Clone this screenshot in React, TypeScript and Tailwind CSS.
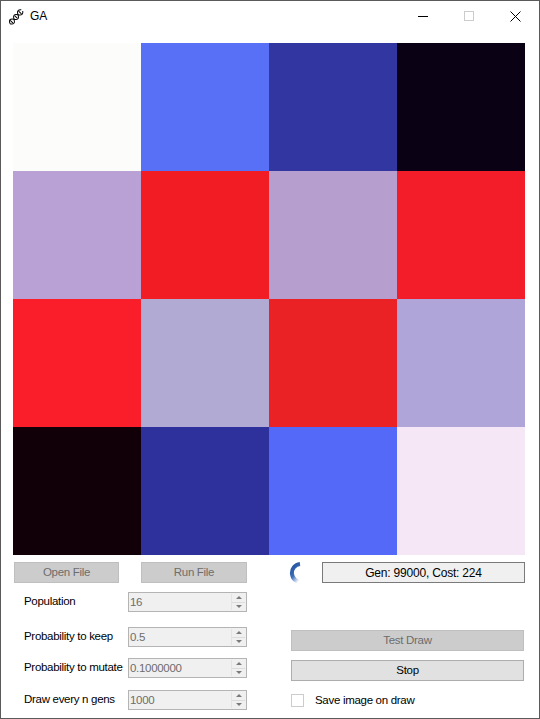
import React from 'react';

const cells = [
  '#fcfcfa', '#5870f5', '#3236a1', '#0b0114',
  '#b9a1d5', '#f21d24', '#b69fcf', '#f21d28',
  '#fa1e2a', '#b1aad2', '#ea2225', '#afa5d8',
  '#110008', '#2e309c', '#5469f8', '#f6e7f7',
];

const params = [
  { label: 'Population', value: '16', mt: 'mt-[9px]' },
  { label: 'Probability to keep', value: '0.5', mt: 'mt-[15px]' },
  { label: 'Probability to mutate', value: '0.1000000', mt: 'mt-[11px]' },
  { label: 'Draw every n gens', value: '1000', mt: 'mt-[12px]' },
];

function DnaIcon() {
  // helix drawn flat, then turned onto the diagonal
  return (
    <svg width="16" height="16" viewBox="0 0 16 16" fill="none" stroke="#000" strokeWidth="1">
      <g transform="rotate(-48 8 8)">
        <path d="M-1 8 C1 4.5, 3 4.5, 5 8 S9 11.5, 11 8 S15 4.5, 17 7" />
        <path d="M-1 8 C1 11.5, 3 11.5, 5 8 S9 4.5, 11 8 S15 11.5, 17 9" />
        <path d="M1.5 6 V10 M8 6 V10 M14 6 V10" />
      </g>
    </svg>
  );
}

function Spinner() {
  return (
    <svg width="16" height="22" viewBox="0 0 16 22">
      <defs>
        <linearGradient id="sp" x1="0" y1="0" x2="0.6" y2="1">
          <stop offset="0" stopColor="#1f4f9e" />
          <stop offset="0.55" stopColor="#3f6fb8" />
          <stop offset="1" stopColor="#ffffff" />
        </linearGradient>
      </defs>
      <path d="M11 2 A9 9 0 0 0 13 20" stroke="url(#sp)" strokeWidth="4" fill="none" />
    </svg>
  );
}

function SpinBox({ value }: { value: string }) {
  return (
    <div className="flex w-[119px] h-[20px] bg-[#f0f0f0] border border-[#b4b4b4]">
      <div className="flex-1 pl-[1px] text-[#6d6d6d] leading-[18px]">{value}</div>
      <div className="flex flex-col w-[14px] my-[1px] mr-[1px] border-l border-[#e3e3e3]">
        <div className="flex-1 flex items-center justify-center border-b border-[#dcdcdc]">
          <div className="w-0 h-0 border-l-[3px] border-r-[3px] border-b-[3px] border-l-transparent border-r-transparent border-b-[#7a7a7a]" />
        </div>
        <div className="flex-1 flex items-center justify-center">
          <div className="w-0 h-0 border-l-[3px] border-r-[3px] border-t-[3px] border-l-transparent border-r-transparent border-t-[#7a7a7a]" />
        </div>
      </div>
    </div>
  );
}

export default function App() {
  return (
    <div
      className="w-[540px] h-[719px] border border-[#5a5a5a] bg-white flex flex-col text-[11.5px] tracking-[-0.3px] text-black"
      style={{ fontFamily: '"Liberation Sans", Arial, sans-serif' }}
    >
      {/* Title bar */}
      <div className="h-[30px] flex items-center">
        <div className="ml-[7px] mt-[1px]">
          <DnaIcon />
        </div>
        <span className="ml-[6px] text-[12px] tracking-normal">GA</span>
        <div className="ml-auto flex items-center h-full">
          <div className="w-[46px] flex justify-center">
            <div className="w-[10px] h-px bg-black" />
          </div>
          <div className="w-[46px] flex justify-center">
            <div className="w-[10px] h-[10px] border border-[#cccccc]" />
          </div>
          <div className="w-[46px] flex justify-center mr-[1px]">
            <svg width="11" height="11" viewBox="0 0 11 11" stroke="#000" strokeWidth="1">
              <path d="M0.5 0.5 L10.5 10.5 M10.5 0.5 L0.5 10.5" />
            </svg>
          </div>
        </div>
      </div>

      {/* Image grid */}
      <div className="mt-[12px] ml-[12px] grid grid-cols-4 w-[512px] h-[512px]">
        {cells.map((c, i) => (
          <div key={i} style={{ backgroundColor: c }} />
        ))}
      </div>

      {/* Top controls row */}
      <div className="mt-[7px] flex items-center h-[21px]">
        <button className="ml-[13px] w-[105px] h-[21px] bg-[#cccccc] border border-[#bfbfbf] text-[#6d6d6d]">
          Open File
        </button>
        <button className="ml-[22px] w-[106px] h-[21px] bg-[#cccccc] border border-[#bfbfbf] text-[#6d6d6d]">
          Run File
        </button>
        <div className="ml-[42px] w-[16px] h-[22px]">
          <Spinner />
        </div>
        <div className="ml-[17px] w-[203px] h-[21px] bg-[#f0f0f0] border border-[#7a7a7a] flex items-center justify-center text-[12px] tracking-[-0.2px]">
          Gen: 99000, Cost: 224
        </div>
      </div>

      {/* Parameters and actions */}
      <div className="flex">
        <div className="flex flex-col w-[246px]">
          {params.map((p) => (
            <div key={p.label} className={`flex items-center ${p.mt}`}>
              <span className="ml-[23px] w-[104px] whitespace-nowrap">{p.label}</span>
              <SpinBox value={p.value} />
            </div>
          ))}
        </div>
        <div className="flex flex-col ml-[44px] w-[233px]">
          <button className="mt-[47px] h-[21px] bg-[#cccccc] border border-[#bfbfbf] text-[#6d6d6d]">
            Test Draw
          </button>
          <button className="mt-[9px] h-[21px] bg-[#e1e1e1] border border-[#adadad] text-black">
            Stop
          </button>
          <div className="mt-[11px] flex items-center">
            <div className="w-[13px] h-[13px] border border-[#cccccc] bg-white" />
            <span className="ml-[11px]">Save image on draw</span>
          </div>
        </div>
      </div>
    </div>
  );
}
